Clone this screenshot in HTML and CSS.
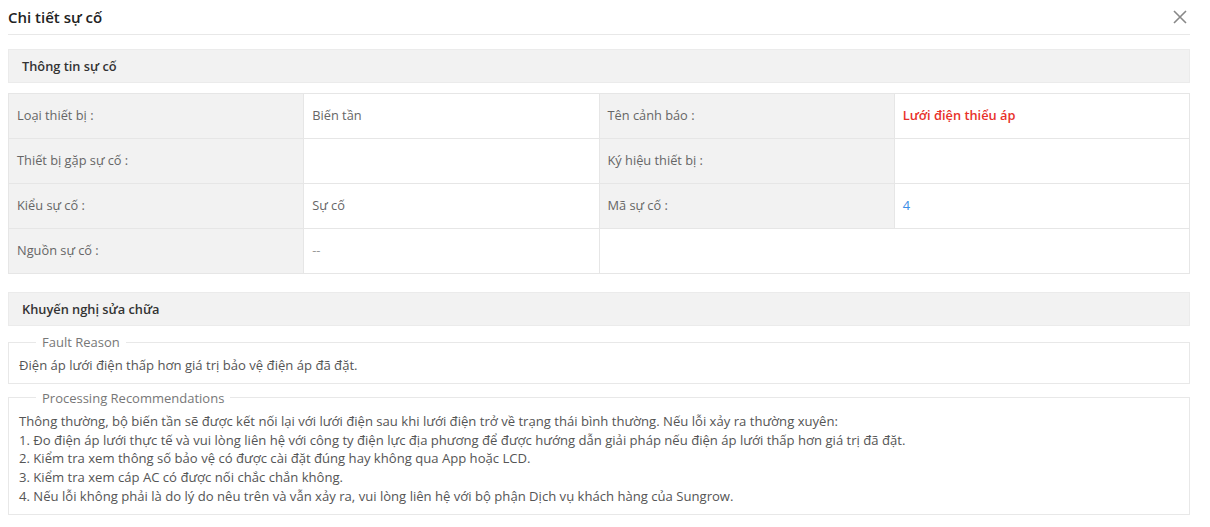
FILE: index.html
```html
<!DOCTYPE html>
<html lang="vi">
<head>
<meta charset="utf-8">
<link rel="stylesheet" href="styles.css">
</head>
<body>
<div class="dialog">
  <div class="dlg-head">
    <div class="dlg-title">Chi tiết sự cố</div>
    <svg class="close" width="14" height="14" viewBox="0 0 14 14"><path d="M1 1L13 13M13 1L1 13" stroke="#888" stroke-width="1.6" fill="none"/></svg>
  </div>
  <div class="section-bar">Thông tin sự cố</div>
  <table class="info">
    <tr>
      <td class="lbl">Loại thiết bị :</td>
      <td class="val">Biến tần</td>
      <td class="lbl">Tên cảnh báo :</td>
      <td class="val red">Lưới điện thiểu áp</td>
    </tr>
    <tr>
      <td class="lbl">Thiết bị gặp sự cố :</td>
      <td class="val"></td>
      <td class="lbl">Ký hiệu thiết bị :</td>
      <td class="val"></td>
    </tr>
    <tr>
      <td class="lbl">Kiểu sự cố :</td>
      <td class="val">Sự cố</td>
      <td class="lbl">Mã sự cố :</td>
      <td class="val blue">4</td>
    </tr>
    <tr>
      <td class="lbl">Nguồn sự cố :</td>
      <td class="val dim">--</td>
      <td class="val" colspan="2"></td>
    </tr>
  </table>
  <div class="section-bar second">Khuyến nghị sửa chữa</div>
  <fieldset class="box">
    <legend>Fault Reason</legend>
    <div class="box-text">Điện áp lưới điện thấp hơn giá trị bảo vệ điện áp đã đặt.</div>
  </fieldset>
  <fieldset class="box">
    <legend>Processing Recommendations</legend>
    <div class="box-text">Thông thường, bộ biến tần sẽ được kết nối lại với lưới điện sau khi lưới điện trở về trạng thái bình thường. Nếu lỗi xảy ra thường xuyên:<br>1. Đo điện áp lưới thực tế và vui lòng liên hệ với công ty điện lực địa phương để được hướng dẫn giải pháp nếu điện áp lưới thấp hơn giá trị đã đặt.<br>2. Kiểm tra xem thông số bảo vệ có được cài đặt đúng hay không qua App hoặc LCD.<br>3. Kiểm tra xem cáp AC có được nối chắc chắn không.<br>4. Nếu lỗi không phải là do lý do nêu trên và vẫn xảy ra, vui lòng liên hệ với bộ phận Dịch vụ khách hàng của Sungrow.</div>
  </fieldset>
</div>
</body>
</html>
```

FILE: styles.css
```css
html, body {
  margin: 0;
  padding: 0;
  background: #fff;
}
body {
  font-family: "Open Sans", "Noto Sans", sans-serif;
  font-size: 12.8px;
  color: #555;
}
.dialog {
  padding: 0 20px 0 8px;
}
.dlg-head {
  display: flex;
  align-items: center;
  justify-content: space-between;
  height: 34px;
  border-bottom: 1px solid #e8e8e8;
}
.dlg-title {
  font-size: 15px;
  font-weight: 600;
  color: #222;
  margin-top: -1px;
}
.close {
  margin-right: 3px;
  margin-top: -1px;
}
.section-bar {
  margin-top: 14px;
  height: 32px;
  line-height: 32px;
  background: #f2f2f2;
  border: 1px solid #ebebeb;
  padding-left: 13px;
  font-weight: 600;
  color: #333;
}
.section-bar.second {
  margin-top: 18px;
}
.info {
  margin-top: 10px;
  width: 100%;
  border-collapse: collapse;
  table-layout: fixed;
}
.info td {
  height: 42px;
  border: 1px solid #e6e6e6;
  padding: 0 0 2px 8px;
  vertical-align: middle;
}
.info td.lbl {
  background: #f2f2f2;
  color: #666;
}
.info td.val {
  color: #666;
}
.info td.red {
  color: #e8302a;
  font-weight: 600;
}
.info td.blue {
  color: #3a8ee6;
}
.info td.dim {
  color: #999;
}
.box {
  margin: 8px 0 0 0;
  padding: 0 10px 8px 10px;
  border: 1px solid #e8e8e8;
  min-width: 0;
}
.box + .box {
  margin-top: 6px;
}
.box legend {
  margin-left: 17px;
  padding: 0 6px;
  color: #777;
  font-size: 13px;
  line-height: 16px;
}
.box-text {
  padding-top: 6px;
  line-height: 18.8px;
  font-size: 13.1px;
  color: #555;
}
```
